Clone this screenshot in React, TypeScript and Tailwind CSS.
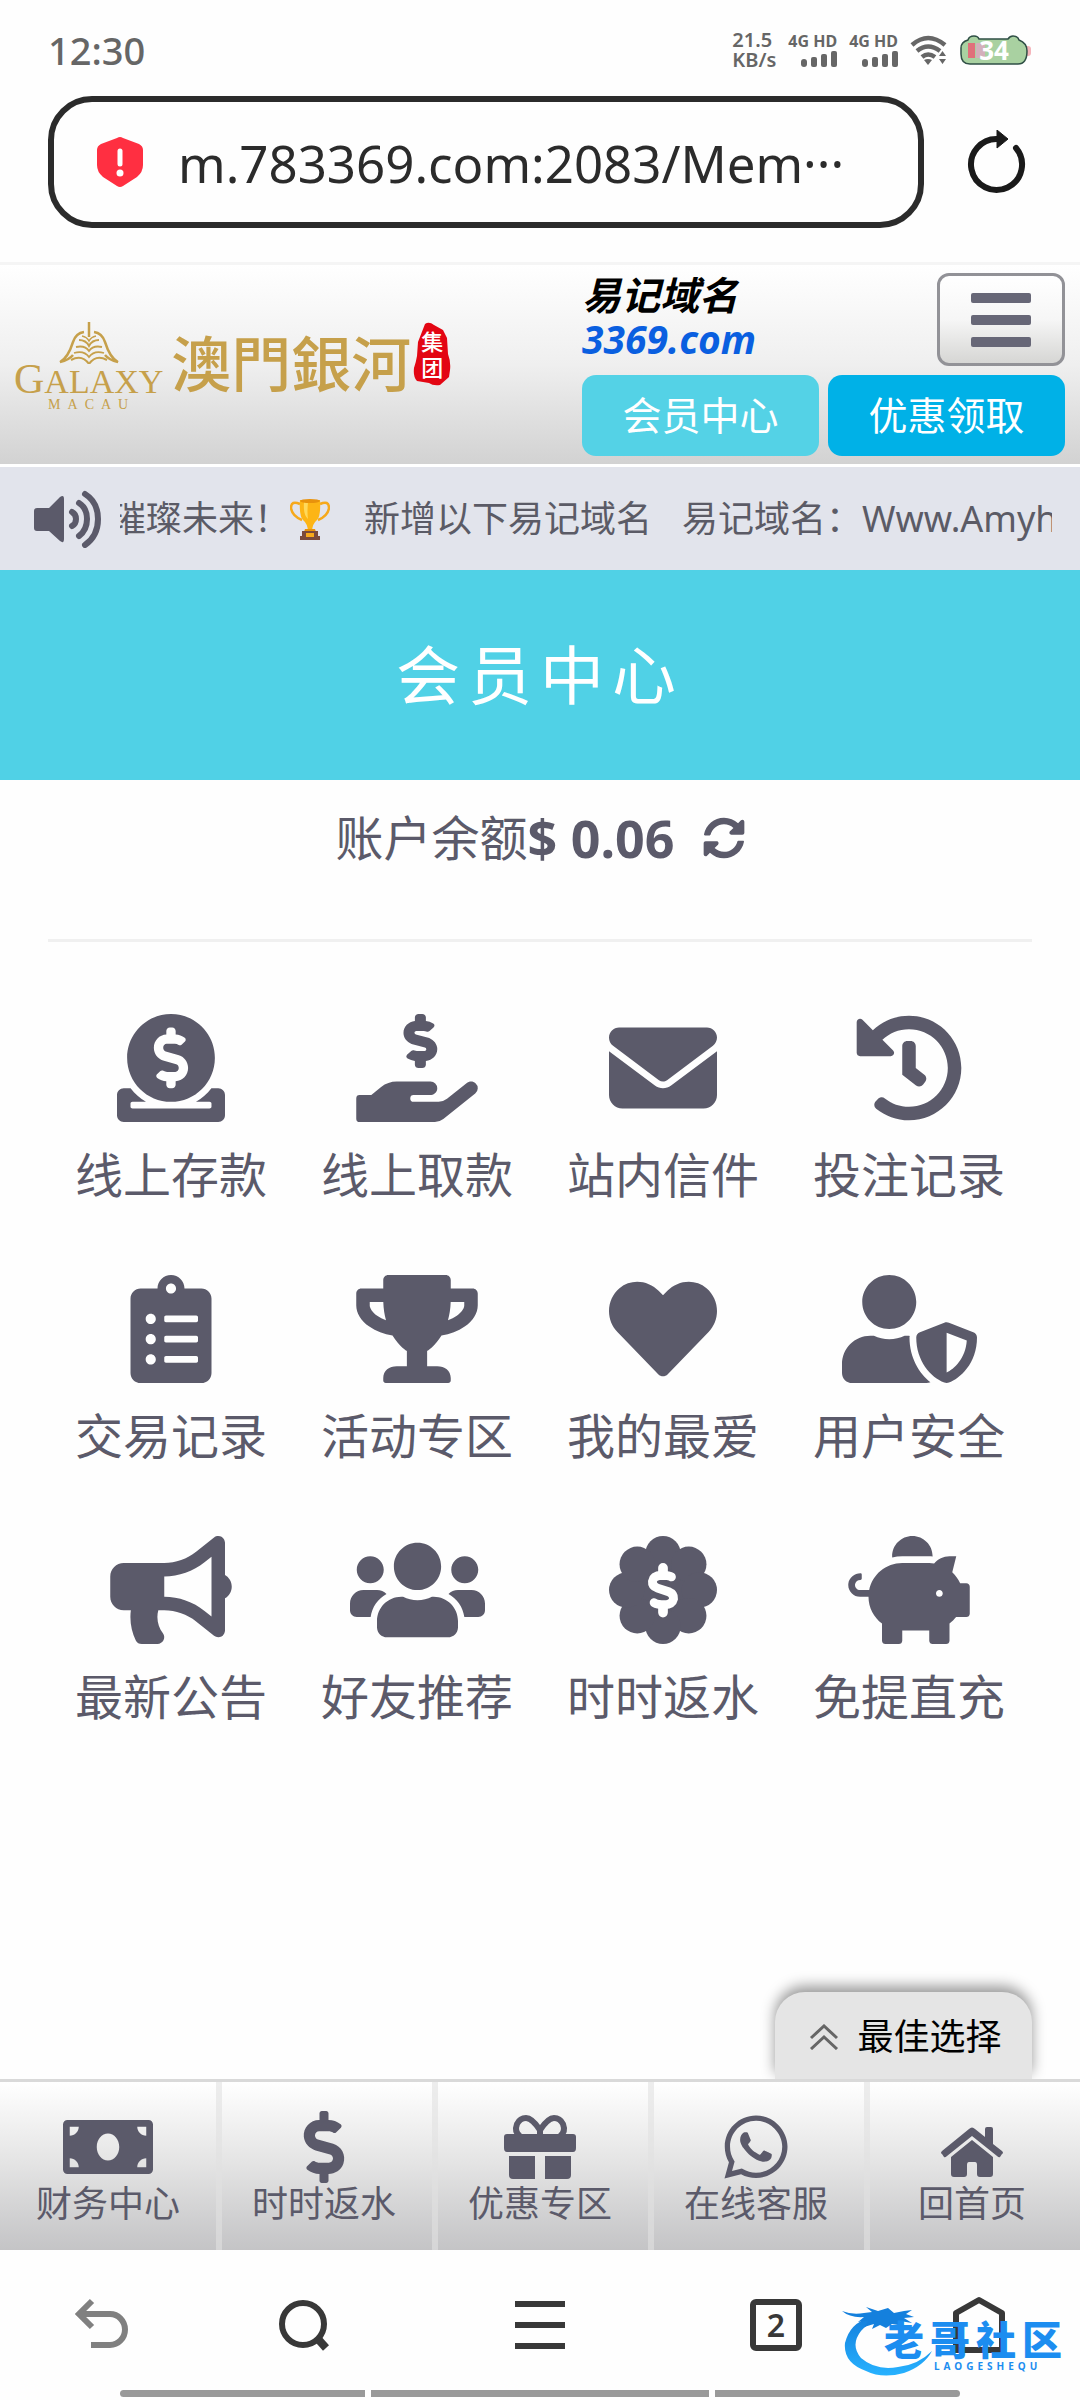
import type { ReactNode } from "react";
import type { IconType } from "react-icons";
import {
  FaBullhorn,
  FaClipboardList,
  FaDollarSign,
  FaDonate,
  FaHandHoldingUsd,
  FaHeart,
  FaHistory,
  FaMoneyBill,
  FaPiggyBank,
  FaSyncAlt,
  FaTrophy,
  FaUserShield,
  FaUsers,
  FaWhatsapp,
} from "react-icons/fa";
import { FaEnvelope } from "react-icons/fa6";

/* ---------- Icons ---------- */

function SignalBars() {
  return (
    <svg viewBox="0 0 36 17" className="h-[17px] w-9 fill-[#666]" aria-hidden="true">
      <rect x="0" y="8" width="6" height="8" rx="3" />
      <rect x="10" y="6" width="6" height="10" rx="2" />
      <rect x="20" y="3" width="6" height="13" rx="2" />
      <rect x="30" y="0" width="6" height="16" rx="2" />
    </svg>
  );
}

function Wifi() {
  return (
    <svg viewBox="0 0 38 32" className="h-8 w-[38px]" fill="none" stroke="#666" strokeWidth="4.5" aria-hidden="true">
      <path d="M2 11Q18 -3 35 11" />
      <path d="M7 17Q18 8 30 17" />
      <path d="M12 23Q18 18 25 23" />
      <path d="M14 26Q18 24 22 26L18 31Z" fill="#666" stroke="none" />
      <path d="M32.500 17L36 22H29ZM32.500 30L36 25H29Z" fill="#666" stroke="none" />
    </svg>
  );
}

function Battery() {
  return (
    <span className="relative flex h-8 w-[72px] items-center justify-center pr-1 text-[26px] leading-8 font-bold text-white">
      <svg viewBox="0 0 72 32" className="absolute inset-0 h-8 w-[72px]" aria-hidden="true">
        <rect x="63" y="12" width="8" height="10" rx="3" fill="#f5b5bb" />
        <path
          d="M8 6Q9 2 14 2Q18 2 19 5H48Q50 2 53 2Q58 2 59 6Q67 9 67 17Q67 30 58 30H10Q1 30 1 20V14Q1 8 8 6Z"
          fill="#a9d1a1"
          stroke="#2f4f45"
          strokeWidth="1.500"
        />
        <rect x="8" y="9" width="7" height="15" fill="#e0707a" />
        <rect x="16" y="9" width="9" height="15" fill="#e6a3c6" opacity="0.7" />
      </svg>
      <span className="relative">34</span>
    </span>
  );
}

function Shield() {
  return (
    <svg viewBox="0 0 48 52" className="h-[52px] w-12 shrink-0" aria-hidden="true">
      <path
        d="M21 2Q24 0 27 2L43 8Q47 10 47 14V29Q47 36 41 41L27 50Q24 52 21 50L7 41Q1 36 1 29V14Q1 10 5 8Z"
        fill="#ff2f41"
      />
      <path d="M24 15V28" stroke="#fff" strokeWidth="5" strokeLinecap="round" />
      <circle cx="24" cy="37" r="3.500" fill="#fff" />
    </svg>
  );
}

function Reload() {
  return (
    <svg viewBox="0 0 60 64" className="h-16 w-[60px]" fill="none" aria-hidden="true">
      <path d="M50 18A25.500 25.500 0 1 1 32 9" stroke="#1a1a1a" strokeWidth="6" strokeLinecap="round" />
      <path d="M31 0L42 9L31 18Z" fill="#1a1a1a" stroke="#1a1a1a" strokeWidth="1" />
    </svg>
  );
}

function GalaxyMark() {
  return (
    <svg viewBox="0 0 60 42" className="h-[42px] w-[60px]" fill="none" stroke="#c6a04b" aria-hidden="true">
      <path d="M30 0V15" strokeWidth="2.500" />
      <path d="M25 10Q17 11 14 20Q9 36 1 40Q10 38 14 33" strokeWidth="2.500" />
      <path d="M35 10Q43 11 46 20Q51 36 59 40Q50 38 46 33" strokeWidth="2.500" />
      <path d="M12 38Q23 32 30 42Q37 32 48 38" strokeWidth="2" />
      <path d="M15 31Q25 28 30 35Q35 28 45 31" strokeWidth="1.800" />
      <path d="M17 25Q26 23 30 29Q34 23 43 25" strokeWidth="1.800" />
      <path d="M20 18Q27 18 30 24Q33 18 40 18" strokeWidth="1.800" />
      <path d="M23 14Q28 15 30 19Q32 15 37 14" strokeWidth="1.500" />
    </svg>
  );
}

function Volume() {
  return (
    <svg viewBox="0 0 68 58" className="h-[58px] w-[68px] shrink-0" aria-hidden="true">
      <path d="M3 18H15L26 7Q30 4 30 9V49Q30 54 26 51L15 41H3Q0 41 0 38V21Q0 18 3 18Z" fill="#5b5a6a" />
      <g fill="none" stroke="#5b5a6a" strokeWidth="6" strokeLinecap="round">
        <path d="M38 22Q42 24 42 29Q42 34 38 36" />
        <path d="M45 13Q53 18 53 29Q53 40 45 46" />
        <path d="M51 4Q64 12 64 29Q64 46 51 55" />
      </g>
    </svg>
  );
}

function GoldCup() {
  return (
    <svg viewBox="0 0 40 42" className="mr-1 inline-block h-[42px] w-10" role="img" aria-label="🏆">
      <path d="M10 6Q1 2 1 10Q2 18 12 22M30 6Q39 2 39 10Q38 18 28 22" fill="none" stroke="#f6a91b" strokeWidth="2.500" />
      <path d="M10 2H30Q31 18 27 22Q22 26 22 34H18Q18 26 13 22Q9 18 10 2Z" fill="#fdb515" />
      <path d="M14 4H18Q17 15 18 21Q13 17 14 4Z" fill="#ffd95a" />
      <ellipse cx="20" cy="3" rx="10" ry="2" fill="#e8920c" />
      <path d="M15 31H25L26 34H14Z" fill="#e8920c" />
      <path d="M12 33H28V38H30V42H10V38H12Z" fill="#7a4a3a" />
      <rect x="16" y="35" width="8" height="4" fill="#f6a91b" />
    </svg>
  );
}

function Gift() {
  return (
    <svg viewBox="0 0 72 64" className="h-16 w-[72px]" aria-hidden="true">
      <g fill="#5b5a6a">
        <path d="M3 19H69Q72 19 72 22V33Q72 37 69 37H3Q0 37 0 33V22Q0 19 3 19Z" />
        <path d="M5 41H31V64H9Q5 64 5 60ZM41 41H67V60Q67 64 63 64H41Z" />
      </g>
      <path
        d="M16 21Q10 17 13 9Q16 3 22 3Q28 3 36 15Q44 3 50 3Q56 3 59 9Q62 17 56 21M36 13V20"
        fill="none"
        stroke="#5b5a6a"
        strokeWidth="6"
      />
    </svg>
  );
}

function House() {
  return (
    <svg viewBox="0 0 62 50" className="h-[50px] w-[62px]" fill="#5b5a6a" aria-hidden="true">
      <path d="M28 2Q31 -1 34 2L44 10V2Q44 0 46 0H50Q52 0 52 2V17L61 24Q63 26 61 27L59 30Q58 31 56 29L31 9L6 29Q4 31 3 30L1 27Q-1 26 1 24Z" />
      <path d="M31 13L52 30V47Q52 50 49 50H39Q36 50 36 47V38Q36 35 34 35H28Q26 35 26 38V47Q26 50 23 50H13Q10 50 10 47V30Z" />
    </svg>
  );
}

function BadgeDollar({ className }: { className?: string }) {
  return (
    <svg viewBox="0 0 512 512" className={className} aria-hidden="true">
      <g fill="#5b5a6a">
        <circle cx="256" cy="256" r="190" />
        <circle cx="256" cy="84" r="84" />
        <circle cx="378" cy="134" r="84" />
        <circle cx="428" cy="256" r="84" />
        <circle cx="378" cy="378" r="84" />
        <circle cx="256" cy="428" r="84" />
        <circle cx="134" cy="378" r="84" />
        <circle cx="84" cy="256" r="84" />
        <circle cx="134" cy="134" r="84" />
      </g>
      <g fill="none" stroke="#fff" strokeLinecap="round" strokeWidth="46">
        <path d="M256 151V172M256 340V363" />
        <path d="M296 194Q285 186 250 186Q210 187 206 215Q204 238 230 247L282 264Q308 275 306 298Q300 325 262 326Q230 326 214 316" strokeWidth="42" />
      </g>
    </svg>
  );
}

/* ---------- Data ---------- */

const SQUARE = "h-[108px] w-[108px]";
const WIDE = "h-[108px] w-[122px]";
const WIDER = "h-[108px] w-[135px]";

const menu: { label: string; icon: IconType | typeof BadgeDollar; size: string }[] = [
  { label: "线上存款", icon: FaDonate, size: SQUARE },
  { label: "线上取款", icon: FaHandHoldingUsd, size: WIDE },
  { label: "站内信件", icon: FaEnvelope, size: SQUARE },
  { label: "投注记录", icon: FaHistory, size: SQUARE },
  { label: "交易记录", icon: FaClipboardList, size: SQUARE },
  { label: "活动专区", icon: FaTrophy, size: WIDE },
  { label: "我的最爱", icon: FaHeart, size: SQUARE },
  { label: "用户安全", icon: FaUserShield, size: WIDER },
  { label: "最新公告", icon: FaBullhorn, size: WIDE },
  { label: "好友推荐", icon: FaUsers, size: WIDER },
  { label: "时时返水", icon: BadgeDollar, size: SQUARE },
  { label: "免提直充", icon: FaPiggyBank, size: WIDE },
];

const tabs: { label: string; icon: ReactNode }[] = [
  { label: "财务中心", icon: <FaMoneyBill className="h-[72px] w-[90px]" /> },
  { label: "时时返水", icon: <FaDollarSign className="size-[72px]" /> },
  { label: "优惠专区", icon: <Gift /> },
  { label: "在线客服", icon: <FaWhatsapp className="size-[72px]" /> },
  { label: "回首页", icon: <House /> },
];

/* ---------- Sections ---------- */

function StatusBar() {
  return (
    <div className="flex h-24 items-center justify-between pt-1 pr-12 pl-12 text-[#666]">
      <span className="text-[38px] leading-none font-medium">12:30</span>
      <div className="flex items-center gap-3">
        <div className="text-[20px] leading-5 font-semibold">
          <div>21.5</div>
          <div>KB/s</div>
        </div>
        {["sim1", "sim2"].map((sim) => (
          <div key={sim} className="flex flex-col items-end gap-0.5 text-base leading-4 font-bold">
            <span>4G HD</span>
            <SignalBars />
          </div>
        ))}
        <Wifi />
        <Battery />
      </div>
    </div>
  );
}

function AddressBar() {
  return (
    <div className="flex items-center justify-between border-b-[3px] border-[#f5f5f5] pr-[54px] pb-[34px] pl-12">
      <label className="flex h-[132px] w-[876px] items-center gap-[34px] rounded-[44px] border-[6px] border-[#2b2b2b] pr-10 pl-[42px]">
        <Shield />
        <input
          type="text"
          aria-label="网址"
          readOnly
          value="m.783369.com:2083/Mem···"
          className="min-w-0 flex-1 bg-transparent pt-0.5 text-[51px] text-[#2b2b2b] outline-none"
        />
      </label>
      <button type="button" aria-label="刷新">
        <Reload />
      </button>
    </div>
  );
}

function SiteHeader() {
  return (
    <header className="flex h-[202px] items-start justify-between border-b-[3px] border-white bg-linear-to-b from-white via-[#efefef] to-[#d2d2d2] pr-[15px] pl-[14px]">
      <a href="#home" className="flex items-start pt-[57px] text-[#c6a04b]" aria-label="澳門銀河集团">
        <span className="flex flex-col items-center font-['Liberation_Serif',serif]">
          <GalaxyMark />
          <span className="text-[34px] leading-[30px]">
            <span className="text-[42px]">G</span>ALAXY
          </span>
          <span className="pl-1.5 text-sm leading-4 tracking-[7px]">MACAU</span>
        </span>
        <span className="ml-2 text-[60px] leading-[84px] font-medium">澳門銀河</span>
        <span className="relative ml-0.5 flex h-[64px] w-[38px] flex-col items-center justify-center text-[22px] leading-[26px] font-medium text-white">
          <svg viewBox="0 0 38 64" className="absolute inset-0 h-16 w-[38px]" aria-hidden="true">
            <path
              d="M12 2Q16 -1 21 3L30 8L34 16L35 32Q38 40 37 48L36 55L27 63Q20 64 16 61L4 59Q0 55 1 46Q3 40 4 34L5 20Z"
              fill="#e30613"
            />
          </svg>
          <span className="relative">集</span>
          <span className="relative">团</span>
        </span>
      </a>

      <div className="w-[483px] pt-2">
        <div className="flex items-start justify-between">
          <p className="text-[39px] leading-[44px] font-bold text-black italic">
            易记域名
            <br />
            <a href="#domain" className="text-[#0a5fe0]">
              3369.com
            </a>
          </p>
          <button
            type="button"
            aria-label="菜单"
            className="flex h-[93px] w-32 flex-col items-center justify-center gap-3 rounded-xl border-[3px] border-[#929297] bg-linear-to-b from-white via-[#f6f6f6] to-[#d6d6d4]"
          >
            <span className="h-2.5 w-[60px] rounded-xs bg-[#676777]" />
            <span className="h-2.5 w-[60px] rounded-xs bg-[#676777]" />
            <span className="h-2.5 w-[60px] rounded-xs bg-[#676777]" />
          </button>
        </div>
        <div className="mt-[9px] grid grid-cols-2 gap-[9px] text-[39px] text-white">
          <button type="button" className="h-[81px] rounded-[14px] bg-[#54d2e6]">
            会员中心
          </button>
          <button type="button" className="h-[81px] rounded-[14px] bg-[#00b1e7]">
            优惠领取
          </button>
        </div>
      </div>
    </header>
  );
}

function Marquee() {
  return (
    <div className="flex h-[103px] items-center gap-[18px] bg-[#e2e4ec] pr-7 pl-[34px] text-[#5b5b66]">
      <Volume />
      <div className="min-w-0 flex-1 overflow-hidden">
        <div className="-ml-2.5 flex items-center gap-[30px] text-[36px] whitespace-nowrap">
          <span className="flex items-center">
            璀璨未来！
            <GoldCup />
          </span>
          <span>新增以下易记域名</span>
          <span>易记域名：Www.Amyh</span>
        </div>
      </div>
    </div>
  );
}

function BottomTabs() {
  return (
    <div>
      <div className="flex justify-end overflow-hidden pt-6 pr-12">
        <button
          type="button"
          className="flex h-[87px] w-[257px] items-center justify-center gap-[18px] rounded-t-[30px] bg-[#e5e5e5] pt-0.5 pl-1 text-[36px] text-black shadow-[0_-6px_14px_0_rgba(0,0,0,0.4)]"
        >
          <svg viewBox="0 0 30 26" className="h-[26px] w-[30px]" fill="none" stroke="#666" strokeWidth="3" aria-hidden="true">
            <path d="M2 14L15 2L28 14M2 25L15 13L28 25" />
          </svg>
          最佳选择
        </button>
      </div>
      <nav className="grid h-[171px] grid-cols-5 border-t-[3px] border-[#d9d9d9] bg-linear-to-b from-white via-[#e3e3e3] to-[#c4c4c6] text-[#5b5a6a]">
        {tabs.map((tab, i) => (
          <a
            key={tab.label}
            href="#tab"
            className={
              i === 0
                ? "flex flex-col items-center pt-[29px] text-[36px] leading-[42px]"
                : "flex flex-col items-center pt-[29px] text-[36px] leading-[42px] shadow-[inset_6px_0_0_rgba(225,225,225,0.6)]"
            }
          >
            <span className={i === 4 ? "flex h-[72px] items-end pb-1.5" : "flex h-[72px] items-center"}>{tab.icon}</span>
            {tab.label}
          </a>
        ))}
      </nav>
    </div>
  );
}

function Watermark() {
  return (
    <div className="pointer-events-none absolute top-[48px] right-[12px] h-20 w-[226px] text-[#1c8df0]">
      <svg viewBox="0 0 226 80" className="absolute inset-0 h-20 w-[226px]" aria-hidden="true">
        <defs>
          <linearGradient id="dragon" x1="0" y1="0" x2="0" y2="1">
            <stop offset="0" stopColor="#1480dd" />
            <stop offset="1" stopColor="#27b2ff" />
          </linearGradient>
        </defs>
        <path
          d="M27 20Q8 25 3 45Q1 65 24 73Q40 81 62 75Q82 68 90 53Q76 67 56 69Q34 73 19 60Q8 47 19 33Q25 26 32 25Z"
          fill="url(#dragon)"
        />
        <path
          d="M0 13Q10 17 22 15L30 14L24 9L36 13L46 10L52 15L62 13L70 12L64 16L72 19L62 20L70 25L58 23L62 28L50 26L44 30L38 27L30 31L32 26L22 29L27 22L16 24L22 19Q8 20 0 13Z"
          fill="#1480dd"
        />
      </svg>
      <span className="absolute top-[22px] right-0 text-[40px] leading-10 font-black tracking-[6px] whitespace-nowrap">老哥社区</span>
      <span className="absolute top-[62px] left-[92px] text-[10px] leading-3 font-bold tracking-[4px]">LAOGESHEQU</span>
    </div>
  );
}

function BrowserToolbar() {
  return (
    <footer className="relative h-[150px] pt-[43px]">
      <div className="flex h-16 items-center justify-between px-[72px]">
        <button type="button" aria-label="后退">
          <svg viewBox="0 0 60 60" className="size-[60px]" fill="none" stroke="#808080" strokeWidth="6" aria-hidden="true">
            <path d="M20 6L7 19L20 32M8 19H38A15 15.500 0 0 1 38 50H19" />
          </svg>
        </button>
        <button type="button" aria-label="搜索" className="ml-0.5">
          <svg viewBox="0 0 60 60" className="size-[60px]" fill="none" stroke="#383838" strokeWidth="6" aria-hidden="true">
            <circle cx="29" cy="29" r="21" />
            <path d="M44 44L52 53" strokeWidth="8" />
          </svg>
        </button>
        <button type="button" aria-label="菜单" className="ml-9">
          <svg viewBox="0 0 60 60" className="size-[60px]" stroke="#383838" strokeWidth="6" aria-hidden="true">
            <path d="M5 9H55M5 30H55M5 51H55" />
          </svg>
        </button>
        <button
          type="button"
          aria-label="标签页"
          className="ml-10 flex size-[52px] items-center justify-center rounded-md border-[6px] border-[#383838] text-[32px] font-semibold text-[#383838]"
        >
          2
        </button>
        <button type="button" aria-label="主页" className="ml-1.5">
          <svg viewBox="0 0 60 60" className="size-[60px]" fill="none" stroke="#383838" strokeWidth="6" strokeLinejoin="round" aria-hidden="true">
            <path d="M8 18L31 5L54 18V55H8Z" />
          </svg>
        </button>
      </div>
      <div className="mx-[120px] mt-[33px] grid h-[7px] grid-cols-[245fr_338fr_245fr] gap-1.5">
        <span className="rounded-l-full bg-[#999]" />
        <span className="bg-[#999]" />
        <span className="rounded-r-full bg-[#999]" />
      </div>
      <Watermark />
    </footer>
  );
}

export default function App() {
  return (
    <div className="flex min-h-screen flex-col bg-[#fefefe] font-['Noto_Sans','Noto_Sans_CJK_SC',sans-serif]">
      <StatusBar />
      <AddressBar />
      <SiteHeader />
      <Marquee />
      <main className="flex-1 text-[#5b5a6a]">
        <h1 className="flex h-[210px] items-center justify-center bg-[#50d1e6] text-[64px] tracking-[8px] text-white">
          会员中心
        </h1>
        <div className="mx-12 flex justify-center border-b-[3px] border-[#f0f0f0] pt-7 pb-[71px] text-[48px] leading-[60px]">
          <span>账户余额</span>
          <strong className="text-[52px]">$ 0.06</strong>
          <button type="button" aria-label="刷新余额" className="ml-7">
            <FaSyncAlt className="size-[42px]" />
          </button>
        </div>
        <div className="mx-12 mt-[72px] grid grid-cols-4 gap-y-[70px]">
          {menu.map(({ label, icon: Icon, size }) => (
            <a key={label} href="#menu" className="flex flex-col items-center gap-[23px] text-[48px] leading-[60px] whitespace-nowrap">
              <Icon className={size} />
              {label}
            </a>
          ))}
        </div>
      </main>
      <BottomTabs />
      <BrowserToolbar />
    </div>
  );
}
